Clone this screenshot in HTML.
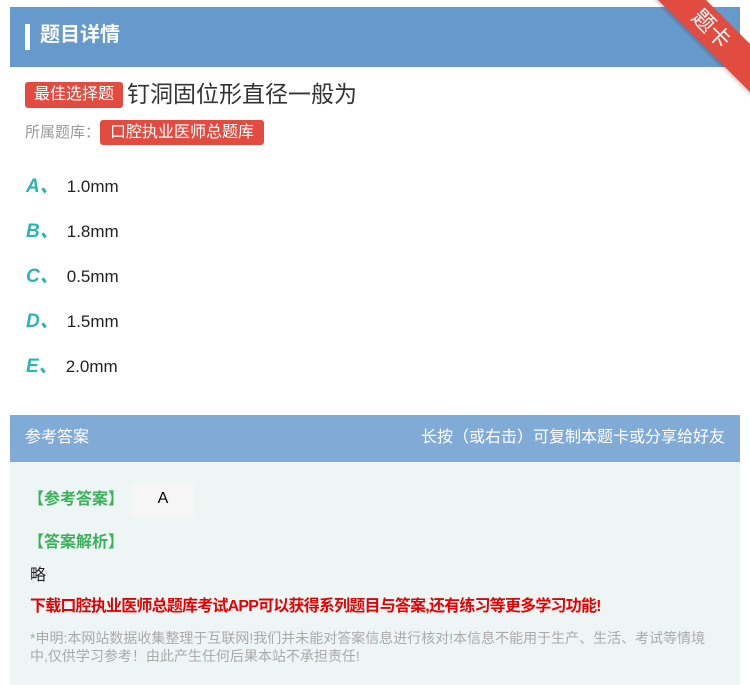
<!DOCTYPE html>
<html><head><meta charset="utf-8"><style>
*{margin:0;padding:0;box-sizing:border-box}
body{width:750px;height:685px;background:#fff;font-family:"Liberation Sans","Noto Sans CJK SC",sans-serif;position:relative;overflow:hidden}
.hd{position:absolute;left:10px;top:7px;width:730px;height:60px;background:#6699cc}
.hd .bar{position:absolute;left:15px;top:17px;width:5px;height:26px;background:#fff}
.hd .t{position:absolute;left:30px;top:14px;color:#fff;font-size:20px;font-weight:bold;line-height:28px}
.rib{position:absolute;right:-36px;top:12px;width:150px;height:34px;background:#e24b3f;transform:rotate(45deg);color:#fff;font-size:22px;text-align:center;line-height:34px;box-shadow:0 2px 3px rgba(0,0,0,.2)}
.tag{display:inline-block;background:#e24b3f;color:#fff;border-radius:3px}
.q{position:absolute;left:25px;top:79px;font-size:23px;color:#333;line-height:30px}
.q .tag{font-size:16px;padding:0 9px;line-height:26px;vertical-align:3px;margin-right:4px}
.lib{position:absolute;left:25px;top:120px;font-size:15px;color:#999;line-height:26px}
.lib .tag{font-size:16px;padding:0 10px;line-height:25px;color:#fff}
.op{position:absolute;left:26px;font-size:17px;color:#222;line-height:22px}
.op b{color:#2ab5b5;font-style:italic;font-size:19px;font-weight:bold;margin-right:8px}
.ah{position:absolute;left:10px;top:415px;width:730px;height:47px;background:#80abd6;color:#fff;font-size:16px;line-height:45px;padding:0 15px}
.ah span{float:right}
.ab{position:absolute;left:10px;top:462px;width:730px;height:223px;background:#eef6f5}
.g{position:absolute;left:28px;color:#3ab05a;font-size:16px;font-weight:bold}
.ans{position:absolute;left:132px;top:484px;width:62px;height:32px;background:#f6f6f6;font-size:16px;text-align:center;line-height:30px}
.red{position:absolute;left:30px;top:592px;color:#e60000;font-size:16px;font-weight:bold;letter-spacing:-0.8px}
.dec{position:absolute;left:30px;top:629px;width:685px;color:#aaa;font-size:14px;line-height:18px}
</style></head><body>
<div class="hd"><div class="bar"></div><div class="t">题目详情</div></div>
<div class="rib">题卡</div>
<div class="q"><span class="tag">最佳选择题</span>钉洞固位形直径一般为</div>
<div class="lib">所属题库：<span class="tag">口腔执业医师总题库</span></div>
<div class="op" style="top:176px"><b>A、</b>1.0mm</div>
<div class="op" style="top:221px"><b>B、</b>1.8mm</div>
<div class="op" style="top:266px"><b>C、</b>0.5mm</div>
<div class="op" style="top:311px"><b>D、</b>1.5mm</div>
<div class="op" style="top:356px"><b>E、</b>2.0mm</div>
<div class="ah">参考答案<span>长按（或右击）可复制本题卡或分享给好友</span></div>
<div class="ab"></div>
<div class="g" style="top:485px">【参考答案】</div>
<div class="ans">A</div>
<div class="g" style="top:528px">【答案解析】</div>
<div style="position:absolute;left:30px;top:561px;font-size:16px;color:#222">略</div>
<div class="red">下载口腔执业医师总题库考试APP可以获得系列题目与答案,还有练习等更多学习功能!</div>
<div class="dec">*申明:本网站数据收集整理于互联网!我们并未能对答案信息进行核对!本信息不能用于生产、生活、考试等情境中,仅供学习参考！由此产生任何后果本站不承担责任!</div>
</body></html>
